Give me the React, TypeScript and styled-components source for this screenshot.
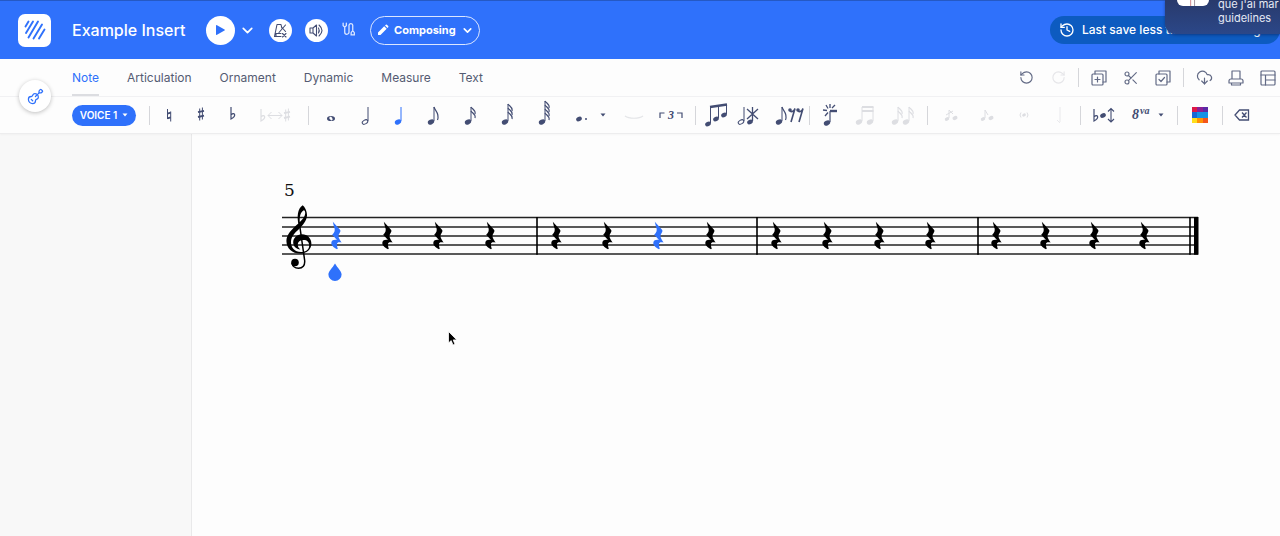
import React from "react";
import styled, { createGlobalStyle } from "styled-components";
import { ChevronDown, CloudDownload, Guitar, History, RotateCcw, RotateCw, Scissors } from "lucide-react";

const blue = "#2f71fb";
const ink = "#434d73";
const faint = "#dddee2";

const GlobalStyle = createGlobalStyle`
  *, *::before, *::after { box-sizing: border-box; }
  html, body, #root { height: 100%; }
  body {
    margin: 0;
    background: #fdfdfd;
    font-family: Inter, "Liberation Sans", sans-serif;
    overflow-x: hidden;
  }
  button { font: inherit; border: 0; padding: 0; background: none; color: inherit; cursor: pointer; }
  svg { display: block; flex: none; }
`;

const Page = styled.div`
  display: flex;
  flex-direction: column;
  min-height: 100%;
  position: relative;
  overflow: hidden;
`;

const Header = styled.header`
  display: flex;
  align-items: center;
  height: 59px;
  padding-left: 18px;
  background: ${blue};
  border-top: 1px solid #2559c4;
  color: #fff;
`;

const Logo = styled.a`
  display: grid;
  place-items: center;
  flex: none;
  width: 33px;
  height: 33px;
  border-radius: 7px;
  background: #fff;
`;

const Title = styled.h1`
  margin: 0 21px;
  font-size: 16px;
  line-height: 24px;
  font-weight: 500;
  white-space: nowrap;
`;

const RoundButton = styled.button<{ $size: number }>`
  display: grid;
  place-items: center;
  flex: none;
  width: ${(p) => p.$size}px;
  height: ${(p) => p.$size}px;
  border-radius: 50%;
  background: #fff;
  color: ${ink};
`;

const Playback = styled.div`
  display: flex;
  align-items: center;
  gap: 13px;
`;

const PlayGroup = styled.div`
  display: flex;
  align-items: center;
  gap: 4px;
`;

const PlainButton = styled.button`
  display: grid;
  place-items: center;
  flex: none;
`;

const ModeButton = styled.button`
  display: flex;
  align-items: center;
  justify-content: center;
  gap: 5px;
  width: 110px;
  height: 29px;
  border: 1px solid #dbe6ff;
  border-radius: 15px;
  font-size: 11px;
  line-height: 16px;
  font-weight: 700;
`;

const SaveStatus = styled.div`
  display: flex;
  align-items: center;
  gap: 7px;
  flex: none;
  height: 28px;
  width: 230px;
  margin-left: auto;
  padding: 0 5px 0 9px;
  border-radius: 14px;
  background: #0d5bc0;
  font-size: 12px;
  line-height: 16px;
  font-weight: 500;
  white-space: nowrap;
`;

const Notification = styled.aside`
  position: absolute;
  top: 0;
  right: 0;
  z-index: 2;
  display: flex;
  align-items: flex-end;
  gap: 9px;
  width: 115px;
  height: 34px;
  padding: 0 0 9px 12px;
  overflow: hidden;
  border-radius: 0 0 0 10px;
  background: linear-gradient(#293a6c, #2b4788);
  box-shadow: 0 1px 3px rgba(10, 25, 80, 0.5);
  color: #e6eaf5;
  font-size: 11px;
  line-height: 14px;
`;

const NotificationIcon = styled.span`
  flex: none;
  align-self: flex-start;
  width: 32px;
  height: 6px;
  border-radius: 0 0 7px 7px;
  background: linear-gradient(90deg, #fff 40%, #c97a80 41%, #fff 46%, #fff 52%, #7a6a78 53%, #fff 58%);
`;

const NotificationText = styled.p`
  margin: 0;
  white-space: nowrap;
`;

const Panel = styled.div`
  display: flex;
  background: #fdfdfd;
  border-bottom: 1px solid #ededee;
  box-shadow: 0 1px 2px rgba(0, 0, 0, 0.03);
  position: relative;
`;

const InstrumentSlot = styled.div`
  display: flex;
  justify-content: center;
  align-items: center;
  flex: none;
  width: 72px;
  padding-right: 2px;
  background: linear-gradient(#f1f1f3, #f1f1f3) 0 37px / 100% 1px no-repeat;
  & > button { box-shadow: 0 1px 4px rgba(0, 0, 0, 0.25); color: ${blue}; }
`;

const Rows = styled.div`
  flex: 1;
  min-width: 0;
`;

const TabRow = styled.div`
  display: flex;
  align-items: center;
  height: 38px;
  border-bottom: 1px solid #f1f1f3;
`;

const Tabs = styled.nav`
  display: flex;
  align-self: stretch;
  gap: 28px;
`;

const Tab = styled.button<{ $active?: boolean }>`
  padding-top: 2px;
  border-bottom: 2px solid ${(p) => (p.$active ? "#dcdde1" : "transparent")};
  color: ${(p) => (p.$active ? blue : "#545b72")};
  font-size: 12px;
  line-height: 16px;
`;

const Actions = styled.div`
  display: flex;
  align-items: center;
  gap: 8px;
  margin-left: auto;
  color: #626a85;
`;

const Action = styled.button`
  display: grid;
  place-items: center;
  flex: none;
  width: 24px;
  height: 24px;
  &:disabled { color: #e6e6e9; }
`;

const Divider = styled.span<{ $gap?: number }>`
  flex: none;
  width: 1px;
  height: 19px;
  margin: 0 ${(p) => p.$gap ?? 0}px;
  background: #d5d6da;
`;

const ToolRow = styled.div`
  display: flex;
  align-items: center;
  height: 36px;
  overflow: hidden;
`;

const VoiceButton = styled.button`
  display: flex;
  align-items: center;
  justify-content: center;
  gap: 5px;
  flex: none;
  width: 64px;
  height: 21px;
  margin-right: 10px;
  border-radius: 11px;
  background: ${blue};
  color: #fff;
  font-size: 10px;
  line-height: 12px;
  font-weight: 600;
`;

const Tool = styled.button`
  flex: none;
  height: 32px;
  color: ${ink};
  &[aria-pressed="true"] { color: ${blue}; }
  &:disabled { color: ${faint}; }
`;

const Workspace = styled.div`
  display: flex;
  flex: 1;
`;

const Gutter = styled.aside`
  flex: none;
  width: 15%;
  background: #f8f8f8;
  border-right: 1px solid #e9e9ea;
`;

const Sheet = styled.main`
  flex: 1;
  min-width: 0;
  padding: 46px 80px 0 90px;
  background: #fdfdfd;
`;

const MeasureNumber = styled.div`
  padding-left: 2px;
  color: #111;
  font: 17px/20px "DejaVu Serif", serif;
`;

const Pointer = styled.svg`
  position: absolute;
  left: 447px;
  top: 330px;
`;

type ToolProps = { label: string; w: number; off?: boolean; on?: boolean; children: React.ReactNode };

function NoteTool({ label, w, off, on, children }: ToolProps) {
  return (
    <Tool aria-label={label} disabled={off} aria-pressed={on ? true : undefined}>
      <svg width={w} height="32" viewBox={`${-w / 2} 0 ${w} 32`} fill="none" stroke="currentColor" strokeWidth="1">
        {children}
      </svg>
    </Tool>
  );
}

const Head = ({ x, y, s = 1 }: { x: number; y: number; s?: number }) => (
  <ellipse cx={x} cy={y} rx={3.3 * s} ry={2.4 * s} transform={`rotate(-25 ${x} ${y})`} fill="currentColor" stroke="none" />
);

const HalfHead = ({ x, y }: { x: number; y: number }) => (
  <ellipse cx={x} cy={y} rx="3" ry="1.9" transform={`rotate(-30 ${x} ${y})`} />
);

const Flags = ({ x, y, n }: { x: number; y: number; n: number }) => (
  <>
    {Array.from({ length: n }, (_, i) => (
      <path key={i} strokeWidth="1.2" d={n === 1
        ? `M${x} ${y} C${x + 1} ${y + 4} ${x + 6} ${y + 6} ${x + 3.5} ${y + 13}`
        : `M${x} ${y + i * 4} C${x + 1} ${y + i * 4 + 2} ${x + 5} ${y + i * 4 + 3} ${x + 4} ${y + i * 4 + 7}`} />
    ))}
  </>
);

const Flat = ({ x, y }: { x: number; y: number }) => (
  <path strokeWidth="1.2" d={`M${x} ${y} V${y + 12} C${x + 2} ${y + 11} ${x + 4} ${y + 9} ${x + 3.6} ${y + 7.4} C${x + 3} ${y + 6} ${x + 1} ${y + 6.5} ${x} ${y + 8}`} />
);

const Sharp = ({ x, y }: { x: number; y: number }) => (
  <>
    <path d={`M${x - 1.3} ${y - 5.5} V${y + 6.5} M${x + 1.4} ${y - 6.5} V${y + 5.5}`} />
    <path strokeWidth="1.8" d={`M${x - 3} ${y - 1.8} L${x + 3} ${y - 3.2} M${x - 3} ${y + 3} L${x + 3} ${y + 1.6}`} />
  </>
);

const Caret = ({ x, y }: { x: number; y: number }) => (
  <path d={`M${x - 2.5} ${y - 1.5} h5 l-2.5 3 z`} fill="currentColor" stroke="none" />
);

const EighthRest = ({ x }: { x: number }) => (
  <>
    <circle cx={x} cy="11" r="1.8" fill="currentColor" stroke="none" />
    <path strokeWidth="1.6" d={`M${x} 12 C${x + 2} 13.500 ${x + 4} 12 ${x + 5} 9.5 L${x + 1} 23`} />
  </>
);

const swatchRows = [
  { y: 8, h: 5, colours: ["#dd1846", "#8a1f96", "#5b2aa6"] },
  { y: 13, h: 6, colours: ["#1667d6", "#1493e6", "#1493e6"] },
  { y: 19, h: 5, colours: ["#ffdf1c", "#ff9206", "#f4561c"] },
];
const swatchColumns = [{ x: -8, w: 5 }, { x: -3, w: 6 }, { x: 3, w: 5 }];

function NoteTools() {
  return (
    <ToolRow>
      <VoiceButton>
        VOICE 1
        <svg width="6" height="4" viewBox="0 0 6 4" fill="currentColor"><path d="M.5.5h5L3 3.5z" /></svg>
      </VoiceButton>
      <Divider $gap={3} />
      <NoteTool label="Natural" w={32}>
        <path d="M-1.5 10 V20 M1.7 12.5 V22.5" />
        <path strokeWidth="1.8" d="M-1.5 14.6 L1.7 13.6 M-1.5 19.4 L1.7 18.4" />
      </NoteTool>
      <NoteTool label="Sharp" w={32}><Sharp x={0} y={15} /></NoteTool>
      <NoteTool label="Flat" w={32}><Flat x={-2} y={8} /></NoteTool>
      <NoteTool label="Enharmonic" w={54} off>
        <Flat x={-15} y={10} />
        <path d="M-8 16.5 H6 M-4.5 13 L-8 16.5 L-4.5 20 M2.5 13 L6 16.5 L2.5 20" />
        <Sharp x={11} y={16} />
      </NoteTool>
      <Divider $gap={5} />
      <NoteTool label="Whole note" w={34}>
        <path fill="currentColor" fillRule="evenodd" stroke="none" d="M-4 19.5a4 2.6 0 1 0 8 0a4 2.6 0 1 0 -8 0M-1.6 18.6c.6-1.4 2.4-.8 3 .8s-.4 2.4-1.4 1.8s-2-1.6-1.6-2.6z" />
      </NoteTool>
      <NoteTool label="Half note" w={34}><HalfHead x={0} y={23} /><path d="M3 22 V8" /></NoteTool>
      <NoteTool label="Quarter note" w={34} on><Head x={-1} y={23} /><path d="M2 22 V8" /></NoteTool>
      <NoteTool label="Eighth note" w={36}><Head x={-3} y={23} /><path d="M0 22 V8" /><Flags x={0} y={8} n={1} /></NoteTool>
      <NoteTool label="Sixteenth note" w={36}><Head x={-2} y={23} /><path d="M1 22 V8" /><Flags x={1} y={8} n={2} /></NoteTool>
      <NoteTool label="Thirty-second note" w={38}><Head x={-2} y={23} /><path d="M1 22 V5" /><Flags x={1} y={5} n={3} /></NoteTool>
      <NoteTool label="Sixty-fourth note" w={36}><Head x={-2} y={23} /><path d="M1 22 V2" /><Flags x={1} y={2} n={4} /></NoteTool>
      <NoteTool label="Dotted note" w={36}><Head x={-1} y={20} s={0.9} /><circle cx="6" cy="20" r="1" fill="currentColor" stroke="none" /></NoteTool>
      <NoteTool label="More dots" w={10}><Caret x={0} y={16} /></NoteTool>
      <NoteTool label="Tie" w={46} off><path opacity="0.8" strokeWidth="1.2" d="M-6 17 C-2 20 8 20 12 17" /></NoteTool>
      <NoteTool label="Triplet" w={34}>
        <path strokeWidth="1.2" d="M-11 19 V14 H-6.5 M6 14 H11 V19" />
        <text x="0" y="20" textAnchor="middle" fill="currentColor" stroke="none" fontFamily="Liberation Serif, serif" fontSize="12" fontWeight="700" fontStyle="italic">3</text>
      </NoteTool>
      <Divider $gap={7} />
      <NoteTool label="Beam notes" w={28}>
        <Head x={-9} y={25} s={0.9} /><Head x={-1} y={20} s={0.9} /><Head x={7} y={16} s={0.9} />
        <path d="M-6.5 24 V8 M1.5 19 V7 M9.5 15 V5" />
        <path strokeWidth="2.4" d="M-7 8 L10 5.5" />
      </NoteTool>
      <NoteTool label="Remove note" w={32}>
        <HalfHead x={-6} y={23} /><path d="M-3 22 V8" />
        <Head x={3} y={23} s={0.9} /><path strokeWidth="1.3" d="M5.5 22 V8 M0 10 L11 20 M11 10 L0 20" />
      </NoteTool>
      <NoteTool label="Fill with rests" w={46}>
        <Head x={-7} y={23} /><path d="M-4 22 V8" /><Flags x={-4} y={8} n={1} />
        <EighthRest x={4} /><EighthRest x={12} />
      </NoteTool>
      <Divider />
      <NoteTool label="Flash note" w={40}>
        <Head x={-3} y={24} /><path strokeWidth="1.2" d="M0 23 V12" /><path strokeWidth="2.4" d="M0 12 H7" />
        <path strokeWidth="1.3" d="M0 9 V5 M-2 9.5 L-4 6 M-3 11.500 L-7 11 M-2 13.500 L-5 17 M2 9 L5 6" />
      </NoteTool>
      <NoteTool label="Double beam" w={32} off>
        <Head x={-7} y={23} /><Head x={4} y={23} />
        <path d="M-4 22 V8 M7 22 V8" /><path strokeWidth="2" d="M-4 8 H7.5 M-4 12 H7.5" />
      </NoteTool>
      <NoteTool label="Separate flags" w={40} off>
        <Head x={-7} y={23} /><Head x={4} y={23} /><path d="M-4 22 V8 M7 22 V8" />
        <Flags x={-4} y={8} n={2} /><Flags x={7} y={8} n={2} />
      </NoteTool>
      <Divider $gap={5} />
      <NoteTool label="Acciaccatura" w={36} off>
        <Head x={-4} y={20} s={0.7} /><path d="M-2 19 V11 L2 15 M-5 16 L2 12" /><Head x={4} y={19} s={0.8} />
      </NoteTool>
      <NoteTool label="Appoggiatura" w={36} off>
        <Head x={-4} y={20} s={0.7} /><path d="M-2 19 V11 L1 16" /><Head x={4} y={19} s={0.8} />
      </NoteTool>
      <NoteTool label="Ghost note" w={38} off>
        <Head x={0} y={16} s={0.6} /><path d="M-3 13.5 Q-5 16 -3 18.5 M3 13.5 Q5 16 3 18.5" />
      </NoteTool>
      <NoteTool label="Stem" w={32} off><path opacity="0.6" d="M1 8 V23 M-2 21 L1 24" /></NoteTool>
      <Divider $gap={5} />
      <NoteTool label="Transpose" w={36}>
        <Flat x={-10} y={10} /><Head x={-1} y={16.5} s={0.9} />
        <path strokeWidth="1.1" d="M7 10 V22 M4 12.5 L7 9.5 L10 12.5 M4 20 L7 23 L10 20" />
      </NoteTool>
      <NoteTool label="Octave" w={34}>
        <text x="-7" y="20" fill="currentColor" stroke="none" fontFamily="Liberation Serif, serif" fontSize="14" fontWeight="700" fontStyle="italic">8</text>
        <text x="1" y="15" fill="currentColor" stroke="none" fontFamily="Liberation Serif, serif" fontSize="10" fontWeight="700" fontStyle="italic">va</text>
      </NoteTool>
      <NoteTool label="More octaves" w={16}><Caret x={-3} y={16} /></NoteTool>
      <Divider $gap={5} />
      <NoteTool label="Note colour" w={34}>
        {swatchRows.map((row) =>
          row.colours.map((c, i) => (
            <rect key={`${row.y}-${i}`} x={swatchColumns[i].x} y={row.y} width={swatchColumns[i].w} height={row.h} fill={c} stroke="none" />
          ))
        )}
      </NoteTool>
      <Divider $gap={5} />
      <NoteTool label="Delete" w={28}>
        <path strokeWidth="1.3" d="M-2.5 11 H6.5 V21 H-2.5 L-7 16 Z M0 13.5 L4.5 18.5 M4.5 13.5 L0 18.5" />
      </NoteTool>
    </ToolRow>
  );
}

const Line = ({ children }: { children: React.ReactNode }) => (
  <svg width="18" height="18" viewBox="0 0 18 18" fill="none" stroke="currentColor" strokeWidth="1.2" strokeLinecap="round" strokeLinejoin="round">
    {children}
  </svg>
);

function EditActions() {
  return (
    <Actions>
      <Action aria-label="Undo"><RotateCcw size={15} strokeWidth={1.8} /></Action>
      <Action aria-label="Redo" disabled><RotateCw size={15} strokeWidth={1.8} /></Action>
      <Divider />
      <Action aria-label="Duplicate">
        <Line><rect x="2" y="5" width="11" height="11" rx="1" /><path d="M5 5V2h11v11h-3M7.5 8v5M5 10.5h5" /></Line>
      </Action>
      <Action aria-label="Cut"><Scissors size={16} strokeWidth={1.7} /></Action>
      <Action aria-label="Select">
        <Line><rect x="2" y="5" width="11" height="11" rx="1" /><path d="M5 5V2h11v11h-3M5 10.5l2 2 3.500-4" /></Line>
      </Action>
      <Divider />
      <Action aria-label="Export"><CloudDownload size={17} strokeWidth={1.7} /></Action>
      <Action aria-label="Print">
        <Line><path d="M5 10V2h8v8M4 10h10a2 2 0 0 1 2 2v2H2v-2a2 2 0 0 1 2-2zM4.5 14v2h9v-2" /></Line>
      </Action>
      <Action aria-label="Layout">
        <Line><rect x="2" y="2" width="14" height="14" rx="1" /><path d="M2 6h14M6.5 6v10M6.5 11H16" /></Line>
      </Action>
    </Actions>
  );
}

const staffLines = [17.5, 27, 36, 45, 54];
const barLines = [255, 475, 696, 908];
const rests = [54, 105, 156, 208, 274, 325, 376, 428, 494, 545, 597, 648, 714, 763, 812, 862];
const selectedRests = [54, 376];

function Staff() {
  return (
    <svg width="100%" viewBox="0 0 918 84" role="img" aria-label="Measures 5 to 8, quarter rests">
      <g stroke="#222" strokeWidth="1.5">
        {staffLines.map((y) => <path key={y} d={`M0 ${y} H916`} />)}
      </g>
      <g stroke="#000" strokeWidth="1.6">
        {barLines.map((x) => <path key={x} d={`M${x} 17 V54.7`} />)}
      </g>
      <rect x="912" y="17" width="4.5" height="37.7" />
      <path d="M16.6 24.5C14.8 17 15.5 8.5 20.7 5.2C22.6 6.5 25.2 11 25 15.5C24.7 21 20.5 25.5 16.8 29.2C12.5 33 9.4 36.5 9 41.5C8.8 47.5 12.5 52 19 52C24 52 27.2 49.5 27.2 45.5C27.2 42 25 40 21.8 40C18 40 15.8 42 15.8 44.8C15.8 47 16.8 48.4 18.4 49.4C14 48.8 11.2 46 11.2 42.4C11.2 38 14.8 34.4 20 34.2C25.5 34.2 29.4 38.5 29.4 43.5C29.4 49.5 24.8 53.6 18.2 53.6C10.3 53.6 4.4 48.2 4.4 41C4.4 34.5 9.5 29.5 16.6 23.2C20 20 23 17 23.2 13.5C23.3 11.5 22.8 10.5 21.8 10.2C18.8 11.5 17 16.5 18 23.5Z" />
      <path d="M17.2 22 L22.6 60 C23.3 65.5 20.5 68.2 16.5 68.2 C13 68.2 10.5 66 10 63" fill="none" stroke="#000" strokeWidth="1.5" />
      <circle cx="13" cy="62.5" r="3.8" />
      {rests.map((x) => (
        <path
          key={x}
          transform={`translate(${x} 22)`}
          fill={selectedRests.includes(x) ? blue : "#000"}
          d="M-3.2 -.3L3.8 7.6C4.8 8.8 4.6 9.8 3.5 11.2C1.8 13.6 2.2 15.4 5.6 20.6C3.2 19.8 1.2 20 1 21.8C.8 23.6 1.2 25 1.8 26.6L1 27.2C-2.6 25.6 -5.2 22.8 -4.6 20.2C-4 17.800 -1.2 17.4 1 18L-3.8 12.8C-1.400 10.6 -.4 8 -2 4.8Z"
        />
      ))}
      <path fill={blue} d="M53 63.5C55.5 68 59.6 71 59.6 74.6A6.6 6.4 0 0 1 46.4 74.6C46.4 71 50.5 68 53 63.5Z" />
    </svg>
  );
}

export default function App() {
  return (
    <Page>
      <GlobalStyle />
      <Header>
        <Logo href="#" aria-label="Home">
          <svg width="22" height="22" viewBox="0 0 22 22" stroke={blue} strokeWidth="1.9" strokeLinecap="round">
            <path d="M1.5 7.5L4.500 2.5M2 14L9 2.5M4.500 18.500L14 2.500M9.500 19.500L18 5.500M15 19.500L20.500 10.500" />
          </svg>
        </Logo>
        <Title>Example Insert</Title>
        <Playback>
          <PlayGroup>
            <RoundButton $size={29} aria-label="Play">
              <svg width="11" height="12" viewBox="0 0 11 12" fill={blue}><path d="M1 1.700Q1 .6 2 1.200L9.500 5.400Q10.500 6 9.500 6.600L2 10.800Q1 11.400 1 10.300Z" /></svg>
            </RoundButton>
            <PlainButton aria-label="Playback options"><ChevronDown size={17} strokeWidth={2.4} /></PlainButton>
          </PlayGroup>
          <RoundButton $size={23} aria-label="Metronome">
            <svg width="15" height="15" viewBox="0 0 15 15" fill="none" stroke="currentColor" strokeWidth="1.100" strokeLinecap="round" strokeLinejoin="round">
              <path d="M8 13.500H1.500L4 1.500H8L8.800 5M2 10.500H8M6 9.500L12.500 2M9 4.500L12.500 8.500M9.500 10.500L13 14M13 10.500L9.500 14M3 13.500V10.500" />
            </svg>
          </RoundButton>
          <RoundButton $size={23} aria-label="Volume">
            <svg width="15" height="15" viewBox="0 0 15 15" fill="none" stroke="currentColor" strokeWidth="1.100" strokeLinecap="round" strokeLinejoin="round">
              <path d="M1 5H4V10H1ZM4 5L7.500 2V13L4 10M9.500 5Q11 7.500 9.500 10M10 2Q16 7.500 10 13" />
            </svg>
          </RoundButton>
          <PlainButton aria-label="Audio connections">
            <svg width="16" height="16" viewBox="-1 1 15 15" fill="none" stroke="#dce7ff" strokeWidth="1.200" strokeLinecap="round">
              <path d="M1 2V4.500Q2.500 6.500 4 4.500V2M2.500 6V10.500A2 2 0 0 0 6.500 10.500V4A1.800 1.800 0 0 1 10 4V9M8.500 13V11Q10 8 11.500 11V13Z" />
            </svg>
          </PlainButton>
          <ModeButton>
            <svg width="12" height="12" viewBox="0 0 12 12" fill="currentColor"><path d="M1 8.500L7.200 2.300L9.700 4.800L3.500 11H1ZM8 1.500L8.800.8Q9.300.3 9.900.8L11.200 2.100Q11.700 2.700 11.200 3.200L10.500 4Z" /></svg>
            Composing
            <ChevronDown size={13} strokeWidth={3} />
          </ModeButton>
        </Playback>
        <SaveStatus>
          <History size={16} strokeWidth={2} />
          Last save less than a minute ago
        </SaveStatus>
      </Header>
      <Notification>
        <NotificationIcon />
        <NotificationText>que j'ai mar<br />guidelines</NotificationText>
      </Notification>
      <Panel>
        <InstrumentSlot>
          <RoundButton $size={32} aria-label="Instrument"><Guitar size={17} strokeWidth={1.8} /></RoundButton>
        </InstrumentSlot>
        <Rows>
          <TabRow>
            <Tabs>
              <Tab $active>Note</Tab>
              <Tab>Articulation</Tab>
              <Tab>Ornament</Tab>
              <Tab>Dynamic</Tab>
              <Tab>Measure</Tab>
              <Tab>Text</Tab>
            </Tabs>
            <EditActions />
          </TabRow>
          <NoteTools />
        </Rows>
      </Panel>
      <Workspace>
        <Gutter />
        <Sheet>
          <MeasureNumber>5</MeasureNumber>
          <Staff />
        </Sheet>
      </Workspace>
      <Pointer width="12" height="17" viewBox="0 0 12 17" aria-hidden="true">
        <path d="M1.500 1.500V13L4.200 10.600L6 15L8 14.200L6.200 9.900H9.800Z" fill="#000" stroke="#fff" strokeWidth=".8" />
      </Pointer>
    </Page>
  );
}
